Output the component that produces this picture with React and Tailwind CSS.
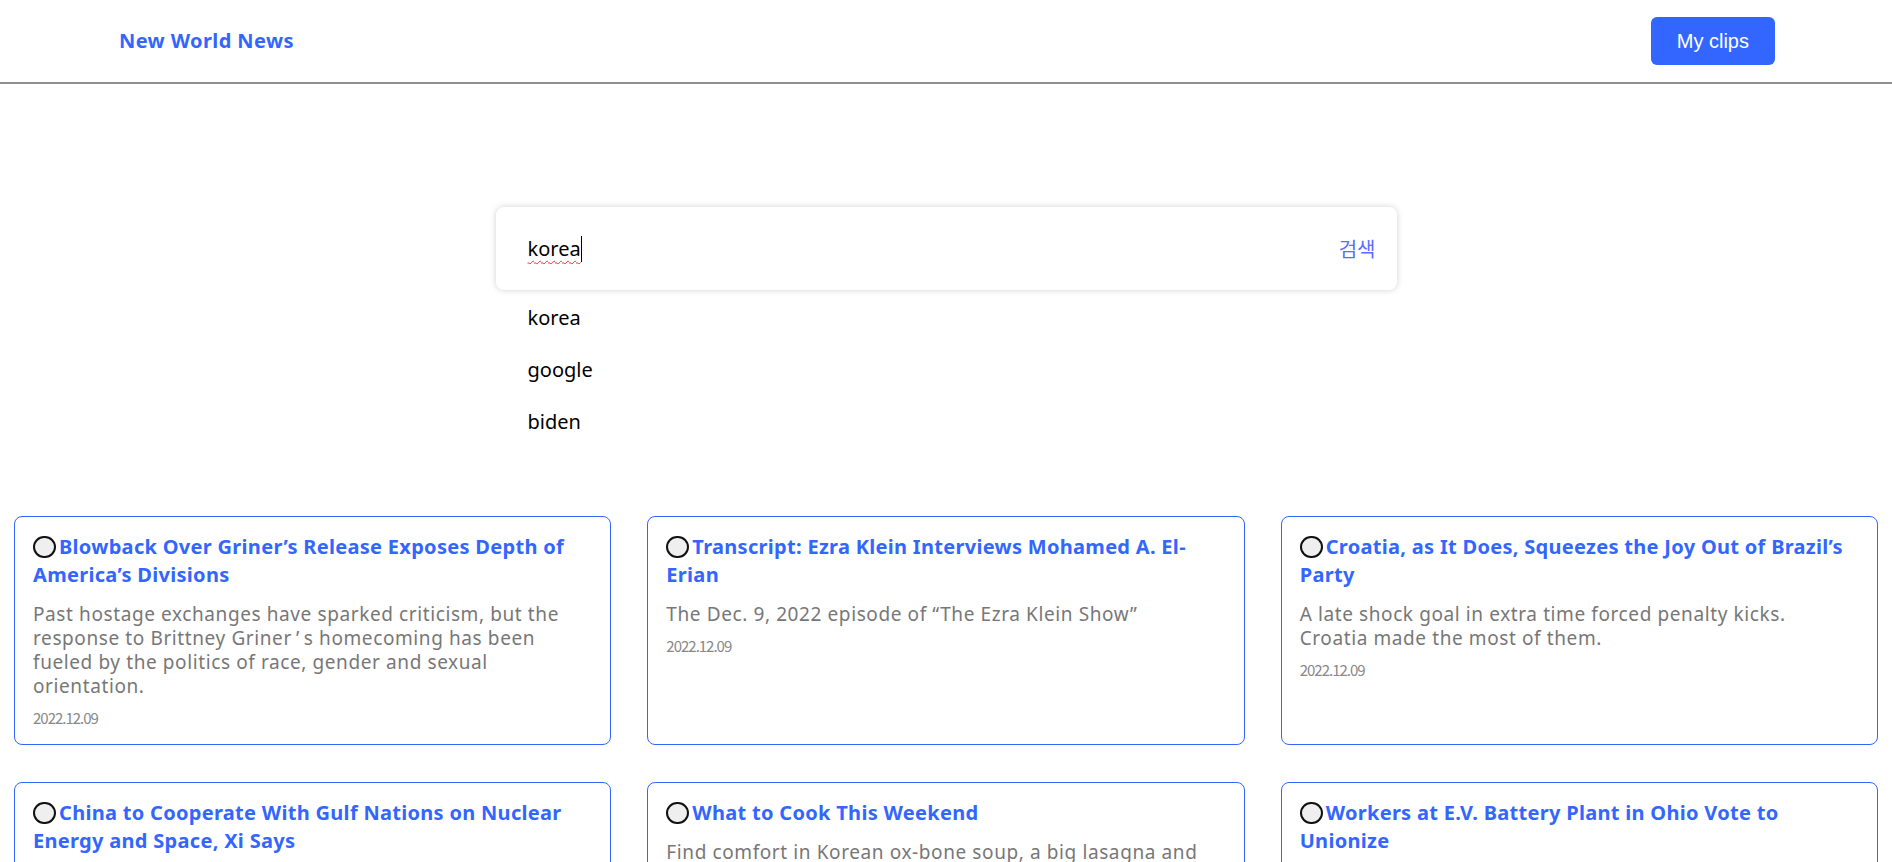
import React from 'react';

const BODY_FONT = "font-['Noto_Sans','Noto_Sans_CJK_KR',sans-serif]";

const suggestions = ['korea', 'google', 'biden'];

const articles = [
  {
    title: 'Blowback Over Griner’s Release Exposes Depth of America’s Divisions',
    desc: 'Past hostage exchanges have sparked criticism, but the response to Brittney Griner’s homecoming has been fueled by the politics of race, gender and sexual orientation.',
    date: '2022.12.09',
  },
  {
    title: 'Transcript: Ezra Klein Interviews Mohamed A. El-Erian',
    desc: 'The Dec. 9, 2022 episode of “The Ezra Klein Show”',
    date: '2022.12.09',
  },
  {
    title: 'Croatia, as It Does, Squeezes the Joy Out of Brazil’s Party',
    desc: 'A late shock goal in extra time forced penalty kicks. Croatia made the most of them.',
    date: '2022.12.09',
  },
  {
    title: 'China to Cooperate With Gulf Nations on Nuclear Energy and Space, Xi Says',
    desc: 'The Chinese leader’s visit to Saudi Arabia was meant to strengthen ties with the region’s oil producers.',
    date: '2022.12.09',
  },
  {
    title: 'What to Cook This Weekend',
    desc: 'Find comfort in Korean ox-bone soup, a big lasagna and a batch of holiday cookies.',
    date: '2022.12.09',
  },
  {
    title: 'Workers at E.V. Battery Plant in Ohio Vote to Unionize',
    desc: 'The vote at a joint venture of General Motors and LG could shape labor relations in the electric vehicle industry.',
    date: '2022.12.09',
  },
];

// the original font sets the curly apostrophe a bit wider
const withQuotes = (text) =>
  text.split('’').map((part, i) => (
    <React.Fragment key={i}>
      {i > 0 && <span className="mx-[4px]">’</span>}
      {part}
    </React.Fragment>
  ));

const Header = () => (
  <header className="flex items-center justify-between h-[84px] px-[117px] border-b-2 border-[#8f8f8f]">
    <h1 className={`${BODY_FONT} pl-[2px] text-[20px] tracking-[0.4px] font-bold text-[#3366ff]`}>New World News</h1>
    <button className="h-[48px] px-[26px] rounded-md bg-[#3366ff] text-white text-[20px] font-['Liberation_Sans',Arial,sans-serif]">
      My clips
    </button>
  </header>
);

const SearchBox = () => (
  <div className="w-[901px] mx-auto mt-[123px]">
    <div className="flex items-center justify-between h-[83px] pl-[32px] pr-[21px] bg-white rounded-lg shadow-[0_0_6px_rgba(0,0,0,0.18)]">
      <span className={`${BODY_FONT} text-[20px] text-black flex items-center`}>
        <span className="underline decoration-wavy decoration-red-500 decoration-1 underline-offset-4">korea</span>
        <span className="w-px h-[26px] bg-black" />
      </span>
      <span className="font-['Noto_Sans_CJK_KR',sans-serif] text-[20px] text-[#5a6dff]">검색</span>
    </div>

    {/* Suggestions */}
    <ul className="pt-[2px]">
      {suggestions.map((s) => (
        <li key={s} className={`${BODY_FONT} h-[52px] flex items-center px-[32px] text-[20px] text-black`}>
          {s}
        </li>
      ))}
    </ul>
  </div>
);

const ArticleCard = ({ title, desc, date }) => (
  <div className="border border-[#3366ff] rounded-lg px-[18px] pt-[16px] pb-[16px] bg-white">
    <h2 className={`${BODY_FONT} text-[20px] leading-[28px] tracking-[0.3px] font-bold text-[#3366ff]`}>
      <span className="inline-block w-[23px] h-[22px] mr-[3px] rounded-full border-2 border-[#111] bg-[#efefef] align-[-4px]" />
      {title}
    </h2>
    <p className={`${BODY_FONT} mt-[13px] mr-[28px] text-[19px] leading-[24px] tracking-[0.6px] text-[#777]`}>
      {withQuotes(desc)}
    </p>
    <p className="mt-[10px] font-['Noto_Sans_CJK_KR',sans-serif] text-[15px] leading-[20px] tracking-[-1px] text-[#888]">
      {date}
    </p>
  </div>
);

export default function App() {
  return (
    <div className="min-h-screen bg-white">
      <Header />
      <SearchBox />

      {/* Article grid */}
      <section className="grid grid-cols-3 gap-x-[36px] gap-y-[37px] px-[14px] mt-[68px] pb-10">
        {articles.map((a) => (
          <ArticleCard key={a.title} {...a} />
        ))}
      </section>
    </div>
  );
}
